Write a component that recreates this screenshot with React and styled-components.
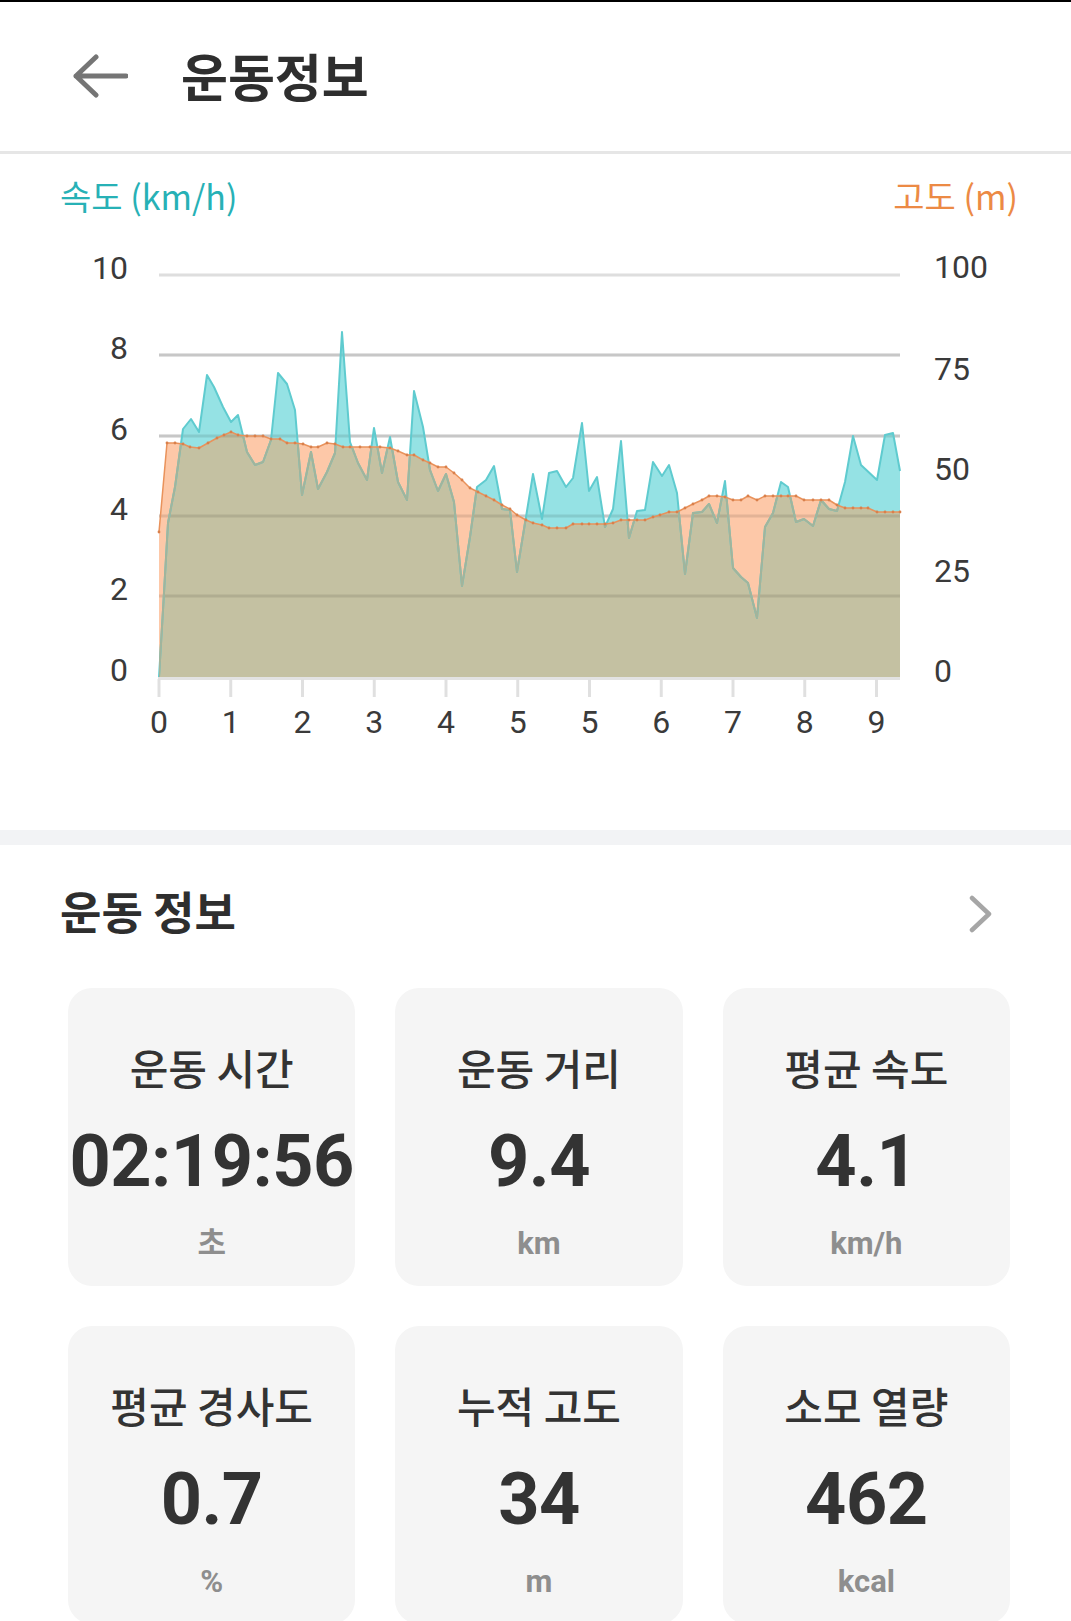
import styled, { createGlobalStyle } from "styled-components";

const GlobalStyle = createGlobalStyle`
  html, body {
    margin: 0;
    padding: 0;
    background: #fff;
    font-family: "Noto Sans CJK KR", "Noto Sans", sans-serif;
    color: #333;
  }
  * {
    box-sizing: border-box;
  }
`;

// traced from the recording, page pixel coords (x = distance, y = value)
const speed = [
  [159, 677], [163, 610], [168, 523], [175, 487], [183, 429], [191, 419], [199, 432],
  [207, 375], [214, 387], [223, 407], [231, 422], [238, 415], [247, 452], [255, 465],
  [263, 462], [271, 440], [278, 373], [287, 384], [295, 410], [302, 495], [311, 452],
  [318, 489], [327, 472], [335, 453], [342, 332], [350, 442], [358, 463], [367, 480],
  [374, 428], [382, 473], [390, 437], [398, 482], [407, 500], [414, 391], [423, 427],
  [430, 470], [438, 491], [446, 474], [454, 502], [462, 586], [470, 537], [477, 487],
  [486, 480], [494, 466], [502, 509], [510, 510], [517, 572], [526, 517], [533, 474],
  [542, 519], [549, 473], [557, 471], [566, 487], [573, 478], [582, 423], [589, 491],
  [597, 477], [605, 527], [613, 509], [621, 441], [629, 538], [637, 511], [645, 510],
  [653, 462], [662, 476], [669, 465], [677, 493], [685, 574], [693, 513], [702, 512],
  [709, 504], [717, 523], [725, 481], [733, 568], [741, 577], [748, 583], [757, 618],
  [765, 527], [773, 513], [781, 482], [788, 487], [796, 522], [804, 519], [813, 526],
  [821, 500], [829, 509], [837, 511], [845, 482], [853, 436], [861, 465], [877, 480],
  [885, 435], [893, 433], [900, 471],
];

const altitude = [
  [159, 532], [167, 443], [175, 443], [183, 444], [190, 447], [199, 448], [208, 443],
  [217, 438], [224, 435], [231, 432], [238, 435], [247, 436], [255, 436], [263, 436],
  [271, 439], [280, 439], [287, 443], [295, 443], [303, 444], [311, 447], [318, 447],
  [327, 443], [335, 444], [343, 447], [350, 447], [360, 447], [370, 447], [380, 447],
  [390, 448], [398, 451], [407, 455], [414, 455], [423, 460], [430, 463], [438, 467],
  [446, 467], [454, 473], [462, 480], [470, 488], [478, 492], [486, 496], [494, 500],
  [502, 505], [510, 509], [517, 515], [526, 520], [533, 523], [542, 525], [549, 528],
  [557, 528], [566, 528], [573, 524], [582, 524], [589, 524], [597, 524], [605, 524],
  [613, 523], [621, 520], [629, 520], [637, 520], [645, 520], [653, 517], [660, 515],
  [669, 512], [677, 512], [685, 508], [693, 504], [702, 500], [709, 496], [717, 496],
  [725, 497], [733, 500], [741, 500], [748, 496], [757, 500], [765, 496], [773, 496],
  [781, 496], [788, 496], [796, 496], [804, 500], [813, 500], [821, 500], [829, 500],
  [837, 505], [845, 508], [853, 508], [861, 508], [868, 508], [877, 512], [885, 512],
  [893, 512], [900, 512],
];

const PLOT_LEFT = 159;
const PLOT_RIGHT = 900;
const BASE_Y = 677;
const grid = [275, 355, 436, 516, 596];
const leftLabels = ["10", "8", "6", "4", "2", "0"];
const rightLabels = [
  { t: "100", y: 278 },
  { t: "75", y: 380 },
  { t: "50", y: 480 },
  { t: "25", y: 582 },
  { t: "0", y: 682 },
];
const xLabels = ["0", "1", "2", "3", "4", "5", "5", "6", "7", "8", "9"];

const stats = [
  { label: "운동 시간", value: "02:19:56", unit: "초" },
  { label: "운동 거리", value: "9.4", unit: "km" },
  { label: "평균 속도", value: "4.1", unit: "km/h" },
  { label: "평균 경사도", value: "0.7", unit: "%" },
  { label: "누적 고도", value: "34", unit: "m" },
  { label: "소모 열량", value: "462", unit: "kcal" },
];

function linePath(pts) {
  return pts.map((p, i) => `${i ? "L" : "M"}${p[0]} ${p[1]}`).join(" ");
}

function areaPath(pts) {
  const first = pts[0];
  const last = pts[pts.length - 1];
  return `${linePath(pts)} L${last[0]} ${BASE_Y} L${first[0]} ${BASE_Y} Z`;
}

const Page = styled.div`
  width: 100%;
  background: #fff;
`;

const Header = styled.header`
  height: 154px;
  border-top: 2px solid #000;
  border-bottom: 3px solid #e6e6e6;
  display: flex;
  align-items: center;
  padding-left: 72px;
`;

const BackIcon = styled.svg`
  width: 56px;
  height: 44px;
  margin-right: 53px;
  margin-top: -2px;
`;

const Title = styled.h1`
  margin: 0;
  font-size: 51px;
  line-height: 60px;
  font-weight: 700;
  color: #2e2e2e;
  margin-top: -4px;
`;

const ChartSection = styled.section`
  height: 676px;
  padding-top: 22px;
`;

const AxisTitles = styled.div`
  display: flex;
  justify-content: space-between;
  padding: 0 53px 0 60px;
  font-size: 34px;
  line-height: 40px;
`;

const AxisTitle = styled.span`
  color: ${(p) => p.$color};
`;

const ChartSvg = styled.svg`
  display: block;
  width: 1071px;
  height: 614px;
`;

const Band = styled.div`
  height: 15px;
  background: #f2f3f5;
`;

const InfoSection = styled.section`
  padding-top: 40px;
`;

const SectionHeader = styled.div`
  display: flex;
  justify-content: space-between;
  align-items: center;
  height: 52px;
  padding: 0 78px 0 60px;
`;

const SectionTitle = styled.h2`
  margin: 0;
  font-size: 45px;
  line-height: 52px;
  font-weight: 700;
  color: #2e2e2e;
`;

const Chevron = styled.svg`
  width: 24px;
  height: 38px;
  margin-top: 6px;
`;

const CardGrid = styled.div`
  display: grid;
  grid-template-columns: repeat(3, 1fr);
  gap: 40px;
  padding: 0 61px 0 68px;
  margin-top: 51px;
`;

const Card = styled.div`
  height: 298px;
  border-radius: 24px;
  background: #f5f5f5;
  display: flex;
  flex-direction: column;
  align-items: center;
  padding-top: 54px;
`;

const Label = styled.div`
  font-size: 42px;
  line-height: 50px;
  font-weight: 500;
  color: #333;
  white-space: nowrap;
`;

const Value = styled.div`
  margin-top: 34px;
  font-family: Roboto, "Liberation Sans", sans-serif;
  font-size: 72px;
  line-height: 72px;
  font-weight: 700;
  letter-spacing: -0.5px;
  color: #333;
`;

const Unit = styled.div`
  margin-top: 28px;
  font-family: Roboto, "Noto Sans CJK KR", sans-serif;
  font-size: 31px;
  line-height: 36px;
  font-weight: 700;
  color: #8e8e8e;
`;

function Chart() {
  const speedArea = areaPath(speed);
  const altArea = areaPath(altitude);
  const speedLine = linePath(speed);
  const altLine = linePath(altitude);
  const tickGap = 71.75;

  return (
    <ChartSvg viewBox="0 216 1071 614">
      <defs>
        <clipPath id="altClip">
          <path d={altArea} />
        </clipPath>
      </defs>

      {grid.map((y) => (
        <line key={y} x1={PLOT_LEFT} x2={PLOT_RIGHT} y1={y} y2={y} stroke="#dedede" strokeWidth="3" />
      ))}

      <path d={speedArea} fill="#95e2e4" />
      <path d={altArea} fill="#fdc8a8" />
      <path d={speedArea} fill="#c4c1a2" clipPath="url(#altClip)" />

      {grid.slice(1).map((y) => (
        <line key={y} x1={PLOT_LEFT} x2={PLOT_RIGHT} y1={y} y2={y} stroke="rgba(0,0,0,0.1)" strokeWidth="3" />
      ))}

      <path d={speedLine} fill="none" stroke="#5fcbcf" strokeWidth="2" strokeLinejoin="round" />
      <path d={speedLine} fill="none" stroke="#a2b49b" strokeWidth="2" strokeLinejoin="round" clipPath="url(#altClip)" />
      <path d={altLine} fill="none" stroke="#e9925b" strokeWidth="1.5" strokeLinejoin="round" />
      {altitude.map((p, i) => (
        <circle key={i} cx={p[0]} cy={p[1]} r="1.4" fill="#d9804c" />
      ))}

      <line x1={PLOT_LEFT - 1} x2={PLOT_RIGHT} y1={BASE_Y + 1.5} y2={BASE_Y + 1.5} stroke="#e2e2e2" strokeWidth="3" />
      {xLabels.map((t, i) => {
        const x = PLOT_LEFT + i * tickGap;
        return (
          <g key={i}>
            <line x1={x} x2={x} y1={BASE_Y + 2} y2={697} stroke="#e0e0e0" strokeWidth="3" />
            <text x={x} y={733} textAnchor="middle" fontFamily="Roboto, sans-serif" fontSize="32" fill="#3a3a3a">
              {t}
            </text>
          </g>
        );
      })}

      {leftLabels.map((t, i) => (
        <text
          key={t}
          x={128}
          y={(i < 5 ? grid[i] : BASE_Y) + 3.5}
          textAnchor="end"
          fontFamily="Roboto, sans-serif"
          fontSize="32"
          fill="#3a3a3a"
        >
          {t}
        </text>
      ))}
      {rightLabels.map((l) => (
        <text key={l.t} x={934} y={l.y} fontFamily="Roboto, sans-serif" fontSize="32" fill="#3a3a3a">
          {l.t}
        </text>
      ))}
    </ChartSvg>
  );
}

export default function App() {
  return (
    <Page>
      <GlobalStyle />
      <Header>
        <BackIcon viewBox="0 0 56 44">
          <path
            d="M4 22 H54 M24 3 L4 22 L24 41"
            fill="none"
            stroke="#757575"
            strokeWidth="5"
            strokeLinecap="round"
            strokeLinejoin="round"
          />
        </BackIcon>
        <Title>운동정보</Title>
      </Header>

      <ChartSection>
        <AxisTitles>
          <AxisTitle $color="#27b1b6">속도 (km/h)</AxisTitle>
          <AxisTitle $color="#ec8a45">고도 (m)</AxisTitle>
        </AxisTitles>
        <Chart />
      </ChartSection>

      <Band />

      <InfoSection>
        <SectionHeader>
          <SectionTitle>운동 정보</SectionTitle>
          <Chevron viewBox="0 0 24 38">
            <path d="M3 3 L20 19 L3 35" fill="none" stroke="#a6a6a6" strokeWidth="4.5" strokeLinecap="round" strokeLinejoin="round" />
          </Chevron>
        </SectionHeader>
        <CardGrid>
          {stats.map((s) => (
            <Card key={s.label}>
              <Label>{s.label}</Label>
              <Value>{s.value}</Value>
              <Unit>{s.unit}</Unit>
            </Card>
          ))}
        </CardGrid>
      </InfoSection>
    </Page>
  );
}
